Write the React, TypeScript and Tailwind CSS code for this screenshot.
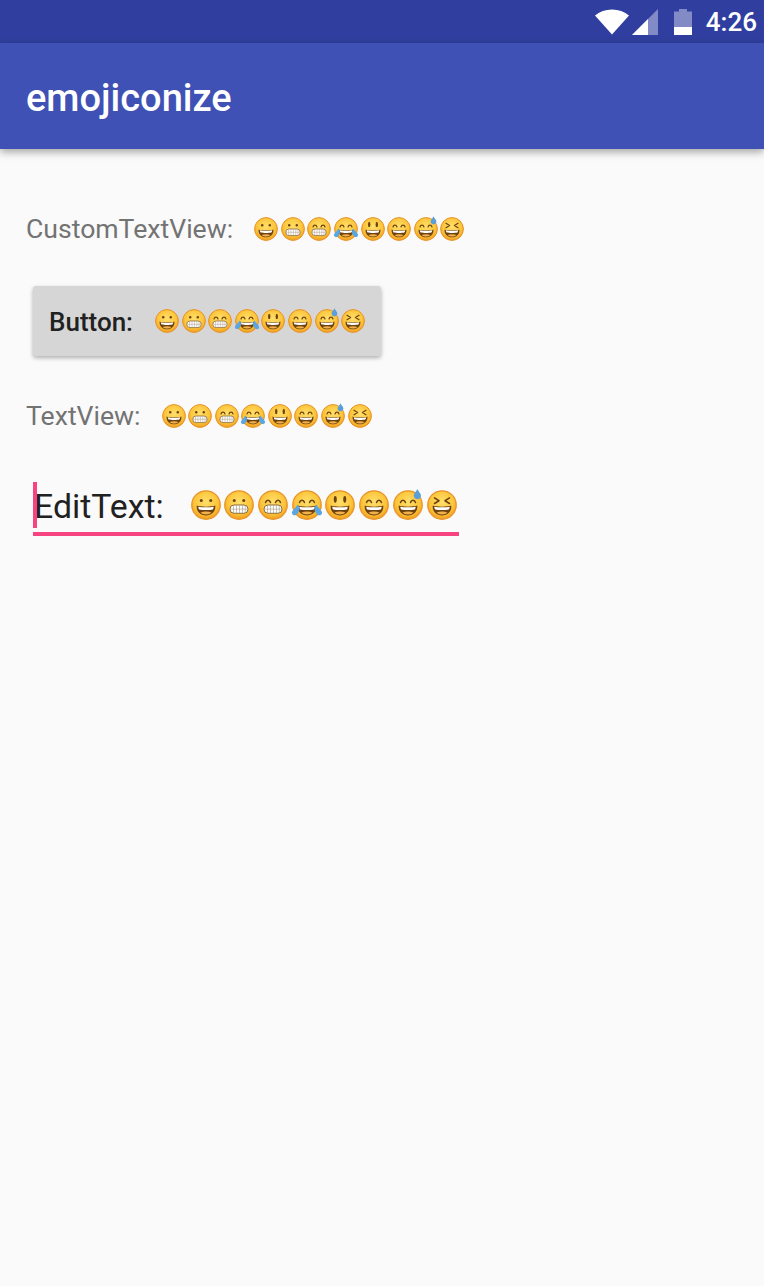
import React, { useId } from 'react';

type Kind = 'grin' | 'grimace' | 'beam' | 'joy' | 'smiley' | 'smile' | 'sweat' | 'squint';

const KINDS: Kind[] = ['grin', 'grimace', 'beam', 'joy', 'smiley', 'smile', 'sweat', 'squint'];

const Mouth = () => (
  <>
    <path d="M4.600 12.400c2.400 1.200 12.400 1.200 14.800 0 .6 4.400-2.700 7.900-7.400 7.900s-8-3.500-7.400-7.900z" fill="#6e4210" />
    <path d="M5.800 13.300c2.600.7 9.800.7 12.400 0-.1 1-.3 1.600-.8 2.200-2.800.6-8 .6-10.800 0-.5-.6-.7-1.200-.8-2.200z" fill="#fff" />
    <path d="M7.600 18c2.500-1.100 6.300-1.100 8.800 0-1.100 1-2.700 1.600-4.400 1.600s-3.300-.6-4.400-1.600z" fill="#f2b04a" />
  </>
);

const Teeth = () => (
  <g>
    <rect x="4.800" y="12" width="14.400" height="6.600" rx="3.200" fill="#fff" stroke="#8a6a3a" strokeWidth=".8" />
    <path d="M5 15.300h14M7.600 12.300v6M10 12.200v6.200M12.400 12.200v6.200M14.800 12.200v6.200M17 12.300v6" stroke="#a89c8a" strokeWidth=".5" />
  </g>
);

const ArcEyes = () => (
  <path d="M6 10c.7-2.500 3.300-2.500 4 0M14 10c.7-2.500 3.300-2.500 4 0" fill="none" stroke="#6b4310" strokeWidth="1.200" strokeLinecap="round" />
);

const DotEyes = () => (
  <>
    <circle cx="8.200" cy="8.300" r="1.200" fill="#6b4310" />
    <circle cx="15.800" cy="8.300" r="1.200" fill="#6b4310" />
  </>
);

const Emoji = ({ kind, size }: { kind: Kind; size: number }) => {
  const id = useId();
  return (
    <svg viewBox="0 0 24 24" width={size} height={size} className="shrink-0 overflow-visible">
      <defs>
        <radialGradient id={id} cx="50%" cy="40%" r="62%">
          <stop offset="0%" stopColor="#ffdf6c" />
          <stop offset="65%" stopColor="#fcc53a" />
          <stop offset="100%" stopColor="#f09a1c" />
        </radialGradient>
      </defs>
      <circle cx="12" cy="12" r="11.400" fill={`url(#${id})`} stroke="#e8932a" strokeWidth="1" />
      {kind === 'grin' && (
        <>
          <DotEyes />
          <Mouth />
        </>
      )}
      {kind === 'grimace' && (
        <>
          <DotEyes />
          <Teeth />
        </>
      )}
      {kind === 'beam' && (
        <>
          <ArcEyes />
          <Teeth />
        </>
      )}
      {kind === 'joy' && (
        <>
          <ArcEyes />
          <Mouth />
          <path d="M4.500 11.500c-1.200 2-3.200 4-4.300 5.600-1 1.800.8 3.600 2.700 3 1.700-.7 2.400-2.300 3-4.100.3-1.400-.2-3.200-1.400-4.500z" fill="#5aa6e2" />
          <path d="M19.500 11.500c1.200 2 3.200 4 4.300 5.600 1 1.800-.8 3.600-2.700 3-1.700-.7-2.400-2.300-3-4.100-.3-1.400.2-3.200 1.400-4.500z" fill="#5aa6e2" />
        </>
      )}
      {kind === 'smiley' && (
        <>
          <ellipse cx="8.200" cy="7.400" rx="1.200" ry="2.700" fill="#6b4310" />
          <ellipse cx="15.800" cy="7.400" rx="1.200" ry="2.700" fill="#6b4310" />
          <Mouth />
        </>
      )}
      {kind === 'smile' && (
        <>
          <ArcEyes />
          <Mouth />
        </>
      )}
      {kind === 'sweat' && (
        <>
          <ArcEyes />
          <Mouth />
          <path d="M19.500 -.8c.8 1.900 2.900 3.500 2.900 5.400 0 1.600-1.300 2.800-2.900 2.800s-2.900-1.200-2.900-2.800c0-1.900 2.100-3.500 2.900-5.400z" fill="#5a9fd8" />
        </>
      )}
      {kind === 'squint' && (
        <>
          <path d="M6 6.300l3.600 2.300L6 10.800M18 6.300l-3.600 2.300 3.600 2.200" fill="none" stroke="#6b4310" strokeWidth="1.200" strokeLinecap="round" strokeLinejoin="round" />
          <Mouth />
        </>
      )}
    </svg>
  );
};

const EmojiRow = ({ size, className }: { size: number; className: string }) => (
  <div className={`flex items-center ${className}`}>
    {KINDS.map((kind) => (
      <Emoji key={kind} kind={kind} size={size} />
    ))}
  </div>
);

export default function App() {
  return (
    <div className="flex h-[1286px] w-[764px] flex-col overflow-hidden bg-[#fafafa] font-['Roboto',sans-serif]">
      {/* Status bar */}
      <div className="flex h-[43px] items-center justify-end bg-[#303f9f] pr-[7px] pt-[1px] text-white">
        <svg viewBox="0 0 34 26" width="34" height="26" className="mr-[3px]">
          <path d="M0 6.500C4.500 2.600 10.500.5 17 .5s12.500 2.100 17 6L17 25.500z" fill="#fff" />
        </svg>
        <svg viewBox="0 0 26 26" width="26" height="26" className="mr-[16px]">
          <path d="M26 0v26H0z" fill="#fff" fillOpacity=".4" />
          <path d="M16 10v16H0z" fill="#fff" />
        </svg>
        <svg viewBox="0 0 18 26" width="18" height="26" className="mr-[14px]">
          <path d="M5 0h8v2.500h5V26H0V2.500h5z" fill="#fff" fillOpacity=".4" />
          <path d="M0 18h18v8H0z" fill="#fff" />
        </svg>
        <span className="text-[26px] font-medium leading-none">4:26</span>
      </div>

      {/* App bar */}
      <div className="z-10 flex h-[106px] items-center bg-[#3f51b5] pl-[26px] pt-[4px] shadow-[0_3px_8px_rgba(0,0,0,0.35)]">
        <span className="text-[38px] font-medium leading-none text-white">emojiconize</span>
      </div>

      {/* Content */}
      <div className="flex flex-col items-start pl-[26px] pt-[66px]">
        <div className="flex h-[28px] items-center text-[26.600px] leading-none text-[#737373]">
          <span>CustomTextView:</span>
          <EmojiRow size={24} className="ml-[21px] gap-[2.600px]" />
        </div>

        <div className="ml-[7px] mt-[43px] flex h-[70px] w-[348px] items-center rounded-[3px] bg-[#d6d6d6] pl-[16px] shadow-[0_2px_4px_rgba(0,0,0,0.3)]">
          <span className="mt-[2px] text-[26px] font-medium leading-none text-[#212121]">Button:</span>
          <EmojiRow size={24} className="ml-[22px] gap-[2.600px]" />
        </div>

        <div className="mt-[46px] flex h-[28px] items-center text-[26.600px] leading-none text-[#737373]">
          <span>TextView:</span>
          <EmojiRow size={24} className="ml-[21px] gap-[2.600px]" />
        </div>

        <div className="relative ml-[7px] mt-[51px] flex h-[55px] w-[426px] items-center border-b-[4px] border-[#f5447f] pb-[3px] pl-[1px]">
          <span className="absolute left-0 top-[1px] h-[46px] w-[4px] bg-[#f5447f]" />
          <span className="mt-[4px] text-[33.800px] leading-none text-[#212121]">EditText:</span>
          <EmojiRow size={30} className="ml-[27px] gap-[3.700px]" />
        </div>
      </div>
    </div>
  );
}
